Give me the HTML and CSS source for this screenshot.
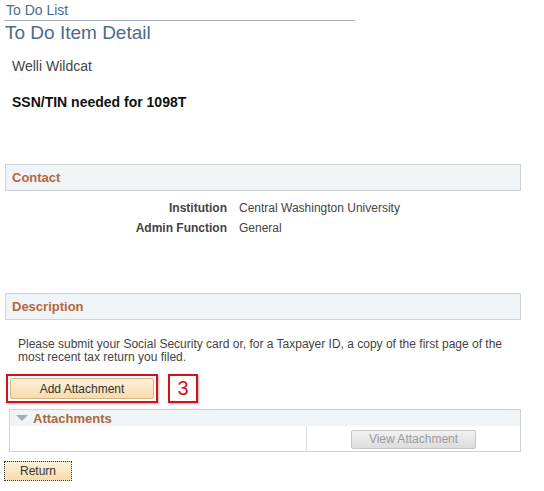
FILE: index.html
```html
<!DOCTYPE html>
<html lang="en">
<head>
    <meta charset="UTF-8">
    <meta name="viewport" content="width=device-width, initial-scale=1.0">
    <title>To Do Item Detail</title>
    <link rel="stylesheet" href="styles.css">
</head>
<body>

    <div class="crumb">To Do List</div>
    <h1 class="page-title">To Do Item Detail</h1>

    <div class="person">Welli Wildcat</div>
    <div class="item-name">SSN/TIN needed for 1098T</div>

    <div class="group-box contact-box">
        <div class="group-head">Contact</div>
        <div class="fields">
            <div class="field">
                <span class="field-label">Institution</span>
                <span class="field-value">Central Washington University</span>
            </div>
            <div class="field">
                <span class="field-label">Admin Function</span>
                <span class="field-value">General</span>
            </div>
        </div>
    </div>

    <div class="group-box desc-box">
        <div class="group-head">Description</div>
        <p class="desc-text">Please submit your Social Security card or, for a Taxpayer ID, a copy of the first page of the most recent tax return you filed.</p>
    </div>

    <div class="attach-row">
        <div class="callout">
            <button class="ps-btn add-btn">Add Attachment</button>
        </div>
        <div class="step">3</div>
    </div>

    <div class="grid">
        <div class="grid-head">
            <span class="arrow"></span>
            Attachments
        </div>
        <div class="grid-row">
            <div class="grid-cell first"></div>
            <div class="grid-cell second">
                <button class="view-btn" disabled>View Attachment</button>
            </div>
        </div>
    </div>

    <button class="ps-btn return-btn">Return</button>

</body>
</html>
```

FILE: styles.css
```css
body {
    font-family: "Liberation Sans", Arial, sans-serif;
    margin: 0;
    color: #333;
    background: #fff;
}
.crumb {
    margin-left: 4px;
    width: 349px;
    padding: 2px 0 2px 2px;
    font-size: 14px;
    line-height: 16px;
    color: #4d6a90;
    border-bottom: 1px solid #a6adb5;
}
.page-title {
    margin: 0 0 0 5px;
    font-size: 19px;
    font-weight: normal;
    line-height: 24px;
    color: #4d6a90;
}
.person {
    margin: 13px 0 0 12px;
    font-size: 14px;
    line-height: 16px;
    color: #444;
}
.item-name {
    margin: 20px 0 0 12px;
    font-size: 14px;
    font-weight: bold;
    line-height: 16px;
    color: #111;
}
.group-box {
    margin-left: 5px;
    width: 516px;
}
.contact-box {
    margin-top: 54px;
}
.group-head {
    height: 25px;
    line-height: 25px;
    padding-left: 6px;
    background: #f1f4f7;
    border: 1px solid #cfd3d6;
    font-size: 13px;
    font-weight: bold;
    color: #b1693a;
}
.fields {
    padding-top: 7px;
    height: 95px;
}
.field {
    display: flex;
    font-size: 12px;
    line-height: 20px;
}
.field-label {
    width: 222px;
    text-align: right;
    font-weight: bold;
    color: #444;
}
.field-value {
    margin-left: 12px;
    color: #444;
}
.desc-text {
    margin: 18px 0 0 13px;
    width: 495px;
    font-size: 12px;
    line-height: 13px;
    color: #444;
}
.attach-row {
    display: flex;
    align-items: flex-start;
    margin: 10px 0 0 6px;
}
.callout {
    border: 2px solid #d0121b;
    padding: 2px;
    box-shadow: 1px 1px 2px rgba(0, 0, 0, 0.3);
}
.ps-btn {
    font-family: "Liberation Sans", Arial, sans-serif;
    font-size: 12px;
    color: #333;
    background: linear-gradient(#fdf0d9, #f8dcaa);
    border: 1px solid #cfb48a;
    border-radius: 2px;
    cursor: pointer;
}
.add-btn {
    display: block;
    width: 144px;
    height: 21px;
    padding: 0;
}
.step {
    margin-left: 10px;
    width: 26px;
    height: 25px;
    border: 2px solid #d0121b;
    box-shadow: 1px 1px 2px rgba(0, 0, 0, 0.3);
    font-size: 20px;
    line-height: 25px;
    text-align: center;
    color: #d0121b;
}
.grid {
    margin: 6px 0 0 9px;
    width: 510px;
    border: 1px solid #cfd3d6;
}
.grid-head {
    display: flex;
    align-items: center;
    height: 16px;
    padding-left: 6px;
    background: #f1f4f7;
    font-size: 13px;
    font-weight: bold;
    color: #a9693c;
}
.arrow {
    width: 0;
    height: 0;
    margin-right: 5px;
    border-left: 6px solid transparent;
    border-right: 6px solid transparent;
    border-top: 6px solid #a9acaf;
}
.grid-row {
    display: flex;
    height: 25px;
}
.first {
    width: 296px;
    border-right: 1px solid #dcdfe2;
}
.second {
    flex: 1;
    padding: 3px 0 0 44px;
}
.view-btn {
    width: 125px;
    height: 19px;
    padding: 0;
    font-family: "Liberation Sans", Arial, sans-serif;
    font-size: 12px;
    color: #9a9a9a;
    background: linear-gradient(#f1f1f1, #dcdcdc);
    border: 1px solid #c6c6c6;
    border-radius: 2px;
}
.return-btn {
    display: block;
    margin: 9px 0 0 4px;
    width: 68px;
    height: 20px;
    padding: 0;
    border: 1px dotted #333;
    border-radius: 0;
}
```
